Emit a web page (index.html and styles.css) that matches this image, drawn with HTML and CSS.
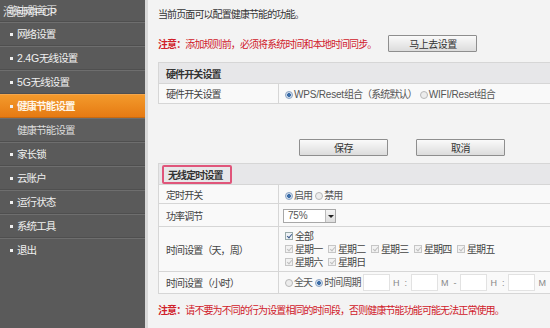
FILE: index.html
```html
<!DOCTYPE html>
<html lang="zh">
<head>
<meta charset="utf-8">
<link rel="stylesheet" href="styles.css">
</head>
<body>
<div class="page">
  <nav class="sidebar">
    <div class="item top">路由器首页</div>
    <div class="item"><span class="dot"></span>网络设置</div>
    <div class="item"><span class="dot"></span><span class="en">2.4G</span>无线设置</div>
    <div class="item"><span class="dot"></span><span class="en">5G</span>无线设置</div>
    <div class="item active"><span class="dot"></span>健康节能设置</div>
    <div class="item sub">健康节能设置</div>
    <div class="item"><span class="dot"></span>家长锁</div>
    <div class="item"><span class="dot"></span>云账户</div>
    <div class="item"><span class="dot"></span>运行状态</div>
    <div class="item"><span class="dot"></span>系统工具</div>
    <div class="item last"><span class="dot"></span>退出</div>
    <div class="watermark">泡泡网 <span class="en">PCP</span></div>
  </nav>
  <main class="main">
    <p class="intro">当前页面可以配置健康节能的功能。</p>
    <div class="notice-row">
      <span class="notice"><b>注意：</b>添加规则前，必须将系统时间和本地时间同步。</span>
      <button class="btn btn-goto">马上去设置</button>
    </div>
    <table class="tbl tbl1">
      <tr class="head"><th colspan="2">硬件开关设置</th></tr>
      <tr class="r20">
        <td class="label">硬件开关设置</td>
        <td class="val"><span class="radio on"></span><span class="en">WPS/Reset</span>组合（系统默认）<span class="radio"></span><span class="en">WIFI/Reset</span>组合</td>
      </tr>
    </table>
    <div class="actions">
      <button class="btn btn-save">保存</button>
      <button class="btn btn-cancel">取消</button>
    </div>
    <table class="tbl tbl2">
      <tr class="head"><th colspan="2"><span class="hl">无线定时设置</span></th></tr>
      <tr class="r19">
        <td class="label">定时开关</td>
        <td class="val"><span class="radio on"></span>启用<span class="radio"></span>禁用</td>
      </tr>
      <tr class="r23">
        <td class="label">功率调节</td>
        <td class="val"><span class="select"><span class="sel-text en">75%</span><span class="sel-arrow"></span></span></td>
      </tr>
      <tr class="r44">
        <td class="label">时间设置（天，周）</td>
        <td class="val days">
          <div class="dayline"><span class="cb on"></span>全部</div>
          <div class="dayline">
            <span class="day"><span class="cb"></span>星期一</span><span class="day"><span class="cb"></span>星期二</span><span class="day"><span class="cb"></span>星期三</span><span class="day"><span class="cb"></span>星期四</span><span class="day"><span class="cb"></span>星期五</span>
          </div>
          <div class="dayline">
            <span class="day"><span class="cb"></span>星期六</span><span class="day"><span class="cb"></span>星期日</span>
          </div>
        </td>
      </tr>
      <tr class="r22">
        <td class="label">时间设置（小时）</td>
        <td class="val hours">
          <span class="radio"></span>全天<span class="radio on"></span>时间周期
          <span class="inp first"></span><span class="u">H</span><span class="u">:</span><span class="inp"></span><span class="u">M</span><span class="u">-</span><span class="inp"></span><span class="u">H</span><span class="u">:</span><span class="inp"></span><span class="u">M</span>
        </td>
      </tr>
    </table>
    <p class="notice bottom"><b>注意：</b>请不要为不同的行为设置相同的时间段，否则健康节能功能可能无法正常使用。</p>
  </main>
</div>
</body>
</html>
```
FILE: styles.css
```css
* { box-sizing: border-box; }
html, body { margin: 0; padding: 0; }
body {
  width: 550px;
  height: 328px;
  overflow: hidden;
  background: #f3f3f3;
  font-family: "Noto Sans CJK SC", "Liberation Sans", sans-serif;
  font-size: 10px;
  letter-spacing: -0.9px;
  color: #3a3a3a;
}
.en { font-family: "Liberation Sans", sans-serif; letter-spacing: -0.2px; }
.page { display: flex; height: 328px; }

.sidebar {
  position: relative;
  width: 148px;
  flex: none;
  background: #5a5a5a;
  border-right: 3px solid #d9d9d9;
  color: #f0f0f0;
}
.item {
  height: 24px;
  display: flex;
  align-items: center;
  padding-left: 10px;
  border-top: 1px solid #6e6e6e;
  border-bottom: 1px solid #4f4f4f;
  font-size: 10.5px;
  line-height: 1;
}
.item.top { height: 22px; border-top: none; padding-left: 8px; color: #c8c8c8; }
.item.last { border-bottom: none; }
.dot { width: 3px; height: 3px; background: #f0f0f0; margin-right: 4px; flex: none; }
.item.active {
  background: linear-gradient(#f39a2c, #e67a12);
  border-top-color: #f5a64a;
  border-bottom-color: #c86a10;
  font-weight: bold;
  color: #fff6e8;
}
.item.sub { padding-left: 17px; background: #5e5e5e; color: #dcdcdc; }
.watermark {
  position: absolute;
  left: 3px;
  top: 3px;
  font-size: 11px;
  color: #ffffff;
  opacity: 0.85;
}

.main { flex: 1; padding-left: 10px; min-width: 0; }
.intro { margin: 0; padding-top: 7px; height: 30px; line-height: 14px; color: #333; }
.notice-row { display: flex; align-items: center; height: 26px; }
.notice { color: #d0202a; }
.notice b { font-weight: bold; }
.btn {
  font-family: inherit;
  font-size: 10px;
  letter-spacing: -0.5px;
  color: #333;
  height: 17px;
  width: 89px;
  padding: 0;
  line-height: 15px;
  border: 1px solid #8e8e8e;
  border-radius: 1px;
  background: linear-gradient(#fafafa, #dcdcdc);
}
.btn-goto { margin-left: 12px; }

.tbl {
  border-collapse: collapse;
  width: 410px;
  background: #f9f9f9;
}
.tbl1 { margin-top: 6px; }
.tbl th {
  height: 21px;
  text-align: left;
  padding: 0 0 0 7px;
  background: #e7e7e9;
  border: 1px solid #d6d6d6;
  font-weight: bold;
  color: #333;
}
.tbl td { border: 1px solid #d6d6d6; padding: 0; vertical-align: middle; }
.tbl td.label { width: 120px; padding-left: 7px; color: #444; }
.tbl td.val { padding-left: 6px; color: #555; }
.r20 td { height: 20px; }
.r19 td { height: 19px; }
.r23 td { height: 23px; }
.r44 td { height: 45px; }
.r22 td { height: 22px; }

.radio {
  display: inline-block;
  width: 8px;
  height: 8px;
  border-radius: 50%;
  border: 1px solid #b8b8b8;
  background: #ececec;
  vertical-align: -1px;
  margin-right: 1px;
}
.radio.on {
  background: radial-gradient(circle, #3b6da8 0 1.6px, #cfdcec 2.2px);
  border-color: #8ea6c4;
}
.val .radio:not(:first-child) { margin-left: 3px; }

.actions { display: flex; gap: 28px; padding-left: 141px; margin-top: 35px; height: 24px; }

.tbl2 { margin-top: 0; }
.tbl2 th { padding-left: 3px; }
.hl {
  display: inline-block;
  border: 2px solid #e0557a;
  border-radius: 2px;
  padding: 0 7px 0 4px;
  line-height: 15px;
}

.select {
  display: inline-flex;
  align-items: center;
  width: 53px;
  height: 14px;
  border: 1px solid #a8a8a8;
  background: #fff;
  vertical-align: middle;
  margin-left: -2px;
}
.sel-text { flex: 1; padding-left: 4px; font-size: 10px; color: #555; line-height: 12px; }
.sel-arrow {
  width: 10px;
  height: 12px;
  border-left: 1px solid #bbb;
  background: linear-gradient(#f4f4f4, #dedede);
  position: relative;
}
.sel-arrow::after {
  content: "";
  position: absolute;
  left: 2px;
  top: 5px;
  border-left: 3px solid transparent;
  border-right: 3px solid transparent;
  border-top: 3px solid #222;
}

.days { padding-top: 1px; }
.dayline { height: 13px; line-height: 12px; display: flex; align-items: center; color: #444; }
.day { display: inline-flex; align-items: center; width: 43px; }
.cb {
  display: inline-block;
  width: 8px;
  height: 8px;
  border: 1px solid #c6c6c6;
  background: #f2f2f2;
  margin-right: 2px;
  position: relative;
  flex: none;
}
.cb::after {
  content: "";
  position: absolute;
  left: 2px;
  top: 0px;
  width: 2px;
  height: 4px;
  border-right: 1px solid #c0c0c0;
  border-bottom: 1px solid #c0c0c0;
  transform: rotate(40deg);
}
.cb.on { border-color: #9aa; background: #eef2f6; }
.cb.on::after { border-color: #3a5a8a; }

.hours { color: #444; white-space: nowrap; }
.hours .inp {
  display: inline-block;
  width: 27px;
  height: 17px;
  background: #fff;
  border: 1px solid #e2e2e2;
  vertical-align: middle;
  margin-left: 2px;
}
.hours .inp.first { margin-left: 1px; }
.hours .u { display: inline-block; color: #888; font-family: "Liberation Sans", sans-serif; font-size: 9px; letter-spacing: 0; margin: 0 2px 0 3px; vertical-align: middle; }

.notice.bottom { margin: 9px 0 0 0; line-height: 14px; }
```
